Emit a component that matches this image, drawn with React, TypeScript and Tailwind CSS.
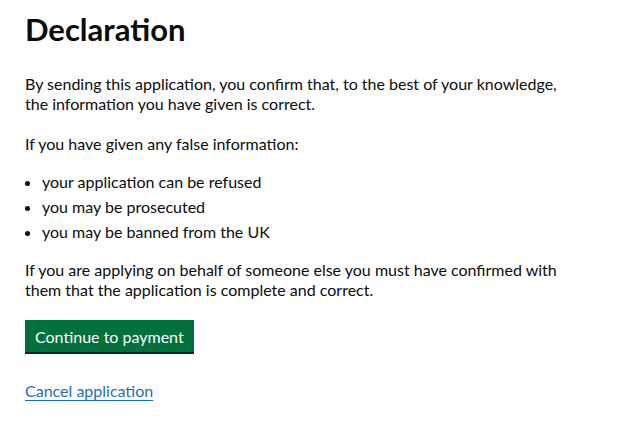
export default function App() {
  return (
    <div className="min-h-screen bg-white px-[25px] pt-[12px] text-[#0b0c0c] font-['Lato',_'Liberation_Sans',_sans-serif]">
      <main className="max-w-[545px]">
        <h1 className="text-[31px] leading-[34px] font-bold mb-[28px]">Declaration</h1>

        <p className="text-base leading-[20px] mb-[20px]">
          By sending this application, you confirm that, to the best of your knowledge, the information you have given is correct.
        </p>

        <p className="text-base leading-[20px] mb-[18px]">If you have given any false information:</p>

        <ul className="list-disc pl-[17px] mb-[18px] text-base leading-[20px]">
          <li className="mb-[5px]">your application can be refused</li>
          <li className="mb-[5px]">you may be prosecuted</li>
          <li className="mb-[5px]">you may be banned from the UK</li>
        </ul>

        <p className="text-base leading-[20px] mb-[20px]">
          If you are applying on behalf of someone else you must have confirmed with them that the application is complete and correct.
        </p>

        <button
          type="button"
          className="block bg-[#00703c] text-white text-base leading-[19px] px-[10px] pt-[7px] pb-[6px] shadow-[0_2px_0_#002d18] mb-[27px]"
        >
          Continue to payment
        </button>

        <a
          href="#"
          className="text-base leading-[20px] text-[#1d70b8] underline underline-offset-[3px] decoration-1"
        >
          Cancel application
        </a>
      </main>
    </div>
  );
}
